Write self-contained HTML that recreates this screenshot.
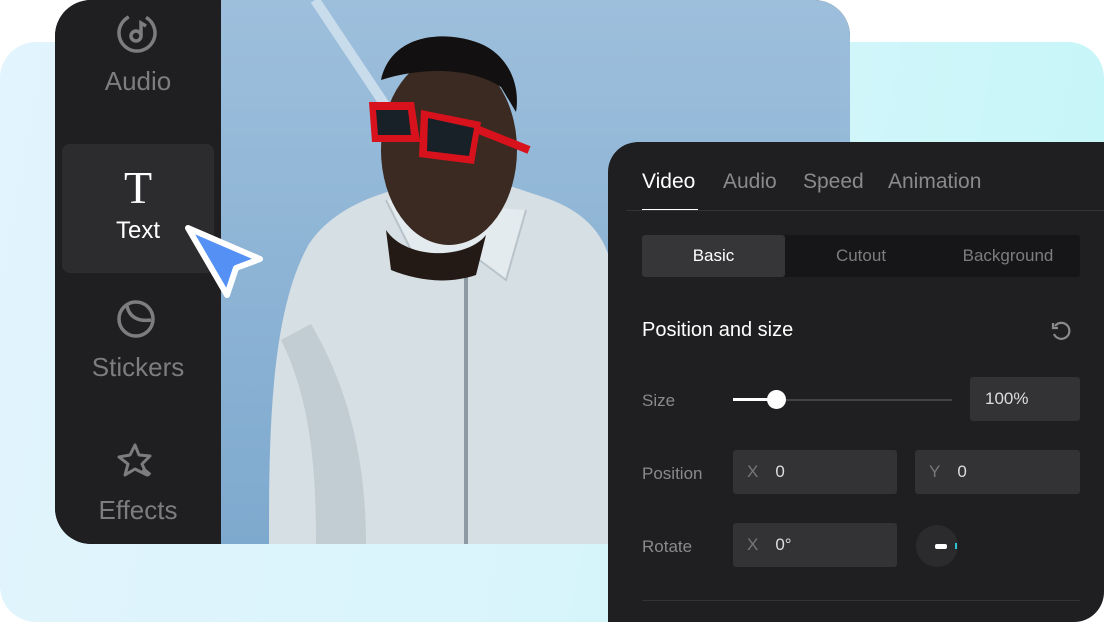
<!DOCTYPE html>
<html><head><meta charset="utf-8"><style>
*{margin:0;padding:0;box-sizing:border-box}
body{width:1104px;height:622px;background:#fff;position:relative;overflow:hidden;font-family:"Liberation Sans",sans-serif}
.bg{position:absolute;left:0;top:42px;width:1104px;height:580px;border-radius:36px;background:linear-gradient(100deg,#e2f4fd 0%,#d9f5fb 50%,#c4f6f8 100%)}
.app{position:absolute;left:55px;top:0;width:795px;height:544px;border-radius:36px;overflow:hidden;background:#1f1f21}
.side{position:absolute;left:0;top:0;width:166px;height:544px;background:#1f1f21}
.item{position:absolute;left:0;width:166px;text-align:center;color:#7d7d7f;font-size:26px;line-height:30px}
.photo{position:absolute;left:166px;top:0;width:629px;height:544px;background:linear-gradient(180deg,#9dbfdc,#7ea9ce)}
.panel{position:absolute;left:608px;top:142px;width:496px;height:480px;background:#1f1f21;border-radius:30px 0 30px 0;color:#8a8a8c;font-size:17px}
.abs{position:absolute}
.box{position:absolute;background:#333335;border-radius:3px;color:#ddd;font-size:17px;line-height:44px}
</style></head><body>
<div class="bg"></div>
<div class="app">
 <div class="side">
  <svg class="abs" style="left:61px;top:12px" width="42" height="42" viewBox="0 0 42 42"><circle cx="21" cy="21" r="18" fill="none" stroke="#7d7d7f" stroke-width="3.5" stroke-dasharray="95 20" transform="rotate(-60 21 21)"/><circle cx="20" cy="24" r="5" fill="none" stroke="#7d7d7f" stroke-width="3.5"/><path d="M25 24V11l5 3" fill="none" stroke="#7d7d7f" stroke-width="3.5"/></svg>
  <div class="item" style="top:66px">Audio</div>
  <div class="abs" style="left:7px;top:144px;width:152px;height:129px;background:#2c2c2e;border-radius:8px"></div>
  <div class="item" style="top:168px;color:#fff;font-family:'Liberation Serif',serif;font-size:46px;line-height:40px">T</div>
  <div class="item" style="top:216px;color:#fff;font-size:24px">Text</div>
  <svg class="abs" style="left:60px;top:300px" width="42" height="38" viewBox="0 0 42 38"><circle cx="21" cy="19" r="17" fill="none" stroke="#7d7d7f" stroke-width="3.5"/><path d="M12 6c2 10 10 16 24 14" fill="none" stroke="#7d7d7f" stroke-width="3.5"/></svg>
  <div class="item" style="top:352px">Stickers</div>
  <svg class="abs" style="left:60px;top:442px" width="44" height="40" viewBox="0 0 44 40"><path d="M20 3l4 10 11 1-8 8 5 11-12-6-10 6 3-11-9-7 11-2z" fill="none" stroke="#7d7d7f" stroke-width="3" stroke-linejoin="round"/><path d="M28 27l7 6" stroke="#7d7d7f" stroke-width="4"/></svg>
  <div class="item" style="top:495px">Effects</div>
 </div>
 <div class="photo">
  <svg width="629" height="544" viewBox="0 0 629 544">
   <path d="M94 0l70 105" stroke="#c8dcec" stroke-width="10"/>
   <path d="M48 544c0-100 0-230 40-300 30-45 90-55 110-60l70-5 60 20c40 15 60 40 65 80l15 265z" fill="#d6dfe4"/>
   <path d="M60 340c30 60 35 130 35 204h50c0-90-20-160-55-220z" fill="#c1ccd3"/>
   <path d="M245 270v274" stroke="#8d9aa3" stroke-width="4"/>
   <path d="M165 200l30 60 50-10 40 30 20-70" fill="#e4ebee" stroke="#b8c3ca" stroke-width="2"/>
   <ellipse cx="228" cy="150" rx="68" ry="95" fill="#3b2a22"/>
   <path d="M165 230c20 30 80 30 100 5l-10 40c-30 10-60 5-85-5z" fill="#241a15"/>
   <path d="M160 80c10-45 60-50 95-38 30 10 45 40 40 70l-15-25c-30-20-80-20-120-7z" fill="#121010"/>
   <path d="M148 102h45l6 40h-48zM200 110l60 12-7 42-55-7z" fill="#d8121c"/>
   <path d="M155 110h32l3 25h-33zM207 118l46 10-5 28-42-5z" fill="#182028"/>
   <path d="M258 130l50 20" stroke="#d8121c" stroke-width="8"/>
  </svg>
 </div>
</div>
<svg class="abs" style="left:182px;top:222px" width="86" height="84" viewBox="0 0 86 84"><path d="M6 6l72 31-24 9-9 27z" fill="#5591f5" stroke="#fff" stroke-width="6" stroke-linejoin="round"/></svg>
<div class="panel">
 <div class="abs" style="left:34px;top:28px;color:#fff;font-size:21px">Video</div>
 <div class="abs" style="left:115px;top:28px;font-size:21px">Audio</div>
 <div class="abs" style="left:195px;top:28px;font-size:21px">Speed</div>
 <div class="abs" style="left:280px;top:28px;font-size:21px">Animation</div>
 <div class="abs" style="left:34px;top:67px;width:56px;height:2px;background:#fff"></div>
 <div class="abs" style="left:18px;top:68px;width:478px;height:1px;background:#333"></div>
 <div class="abs" style="left:34px;top:93px;width:438px;height:42px;background:#161618;border-radius:3px"></div>
 <div class="abs" style="left:34px;top:93px;width:143px;height:42px;background:#363638;border-radius:3px;color:#fff;text-align:center;line-height:42px;font-size:17px">Basic</div>
 <div class="abs" style="left:200px;top:93px;width:106px;text-align:center;line-height:42px;font-size:17px;color:#7d7d7f">Cutout</div>
 <div class="abs" style="left:340px;top:93px;width:120px;text-align:center;line-height:42px;font-size:17px;color:#7d7d7f">Background</div>
 <div class="abs" style="left:34px;top:177px;color:#fff;font-size:20px">Position and size</div>
 <svg class="abs" style="left:441px;top:177px" width="24" height="24" viewBox="0 0 24 24"><path d="M6 7a8 8 0 1 1-1 8" fill="none" stroke="#8a8a8c" stroke-width="2.2"/><path d="M4 4v5h5" fill="none" stroke="#8a8a8c" stroke-width="2.2"/></svg>
 <div class="abs" style="left:34px;top:249px">Size</div>
 <div class="abs" style="left:125px;top:257px;width:219px;height:2px;background:#444"></div>
 <div class="abs" style="left:125px;top:256px;width:44px;height:3px;background:#fff"></div>
 <div class="abs" style="left:159px;top:248px;width:19px;height:19px;border-radius:50%;background:#fff"></div>
 <div class="box" style="left:362px;top:235px;width:110px;padding-left:15px">100%</div>
 <div class="abs" style="left:34px;top:322px">Position</div>
 <div class="box" style="left:125px;top:308px;width:164px;padding-left:14px"><span style="color:#777;margin-right:17px">X</span>0</div>
 <div class="box" style="left:307px;top:308px;width:165px;padding-left:14px"><span style="color:#777;margin-right:17px">Y</span>0</div>
 <div class="abs" style="left:34px;top:395px">Rotate</div>
 <div class="box" style="left:125px;top:381px;width:164px;padding-left:14px"><span style="color:#777;margin-right:17px">X</span>0°</div>
 <div class="abs" style="left:308px;top:383px;width:42px;height:42px;border-radius:50%;background:#2b2b2d"></div>
 <div class="abs" style="left:327px;top:402px;width:12px;height:5px;background:#fff;border-radius:2px"></div>
 <div class="abs" style="left:347px;top:401px;width:2px;height:6px;background:#2bc3d0"></div>
 <div class="abs" style="left:34px;top:458px;width:438px;height:1px;background:#333"></div>
</div>
</body></html>
